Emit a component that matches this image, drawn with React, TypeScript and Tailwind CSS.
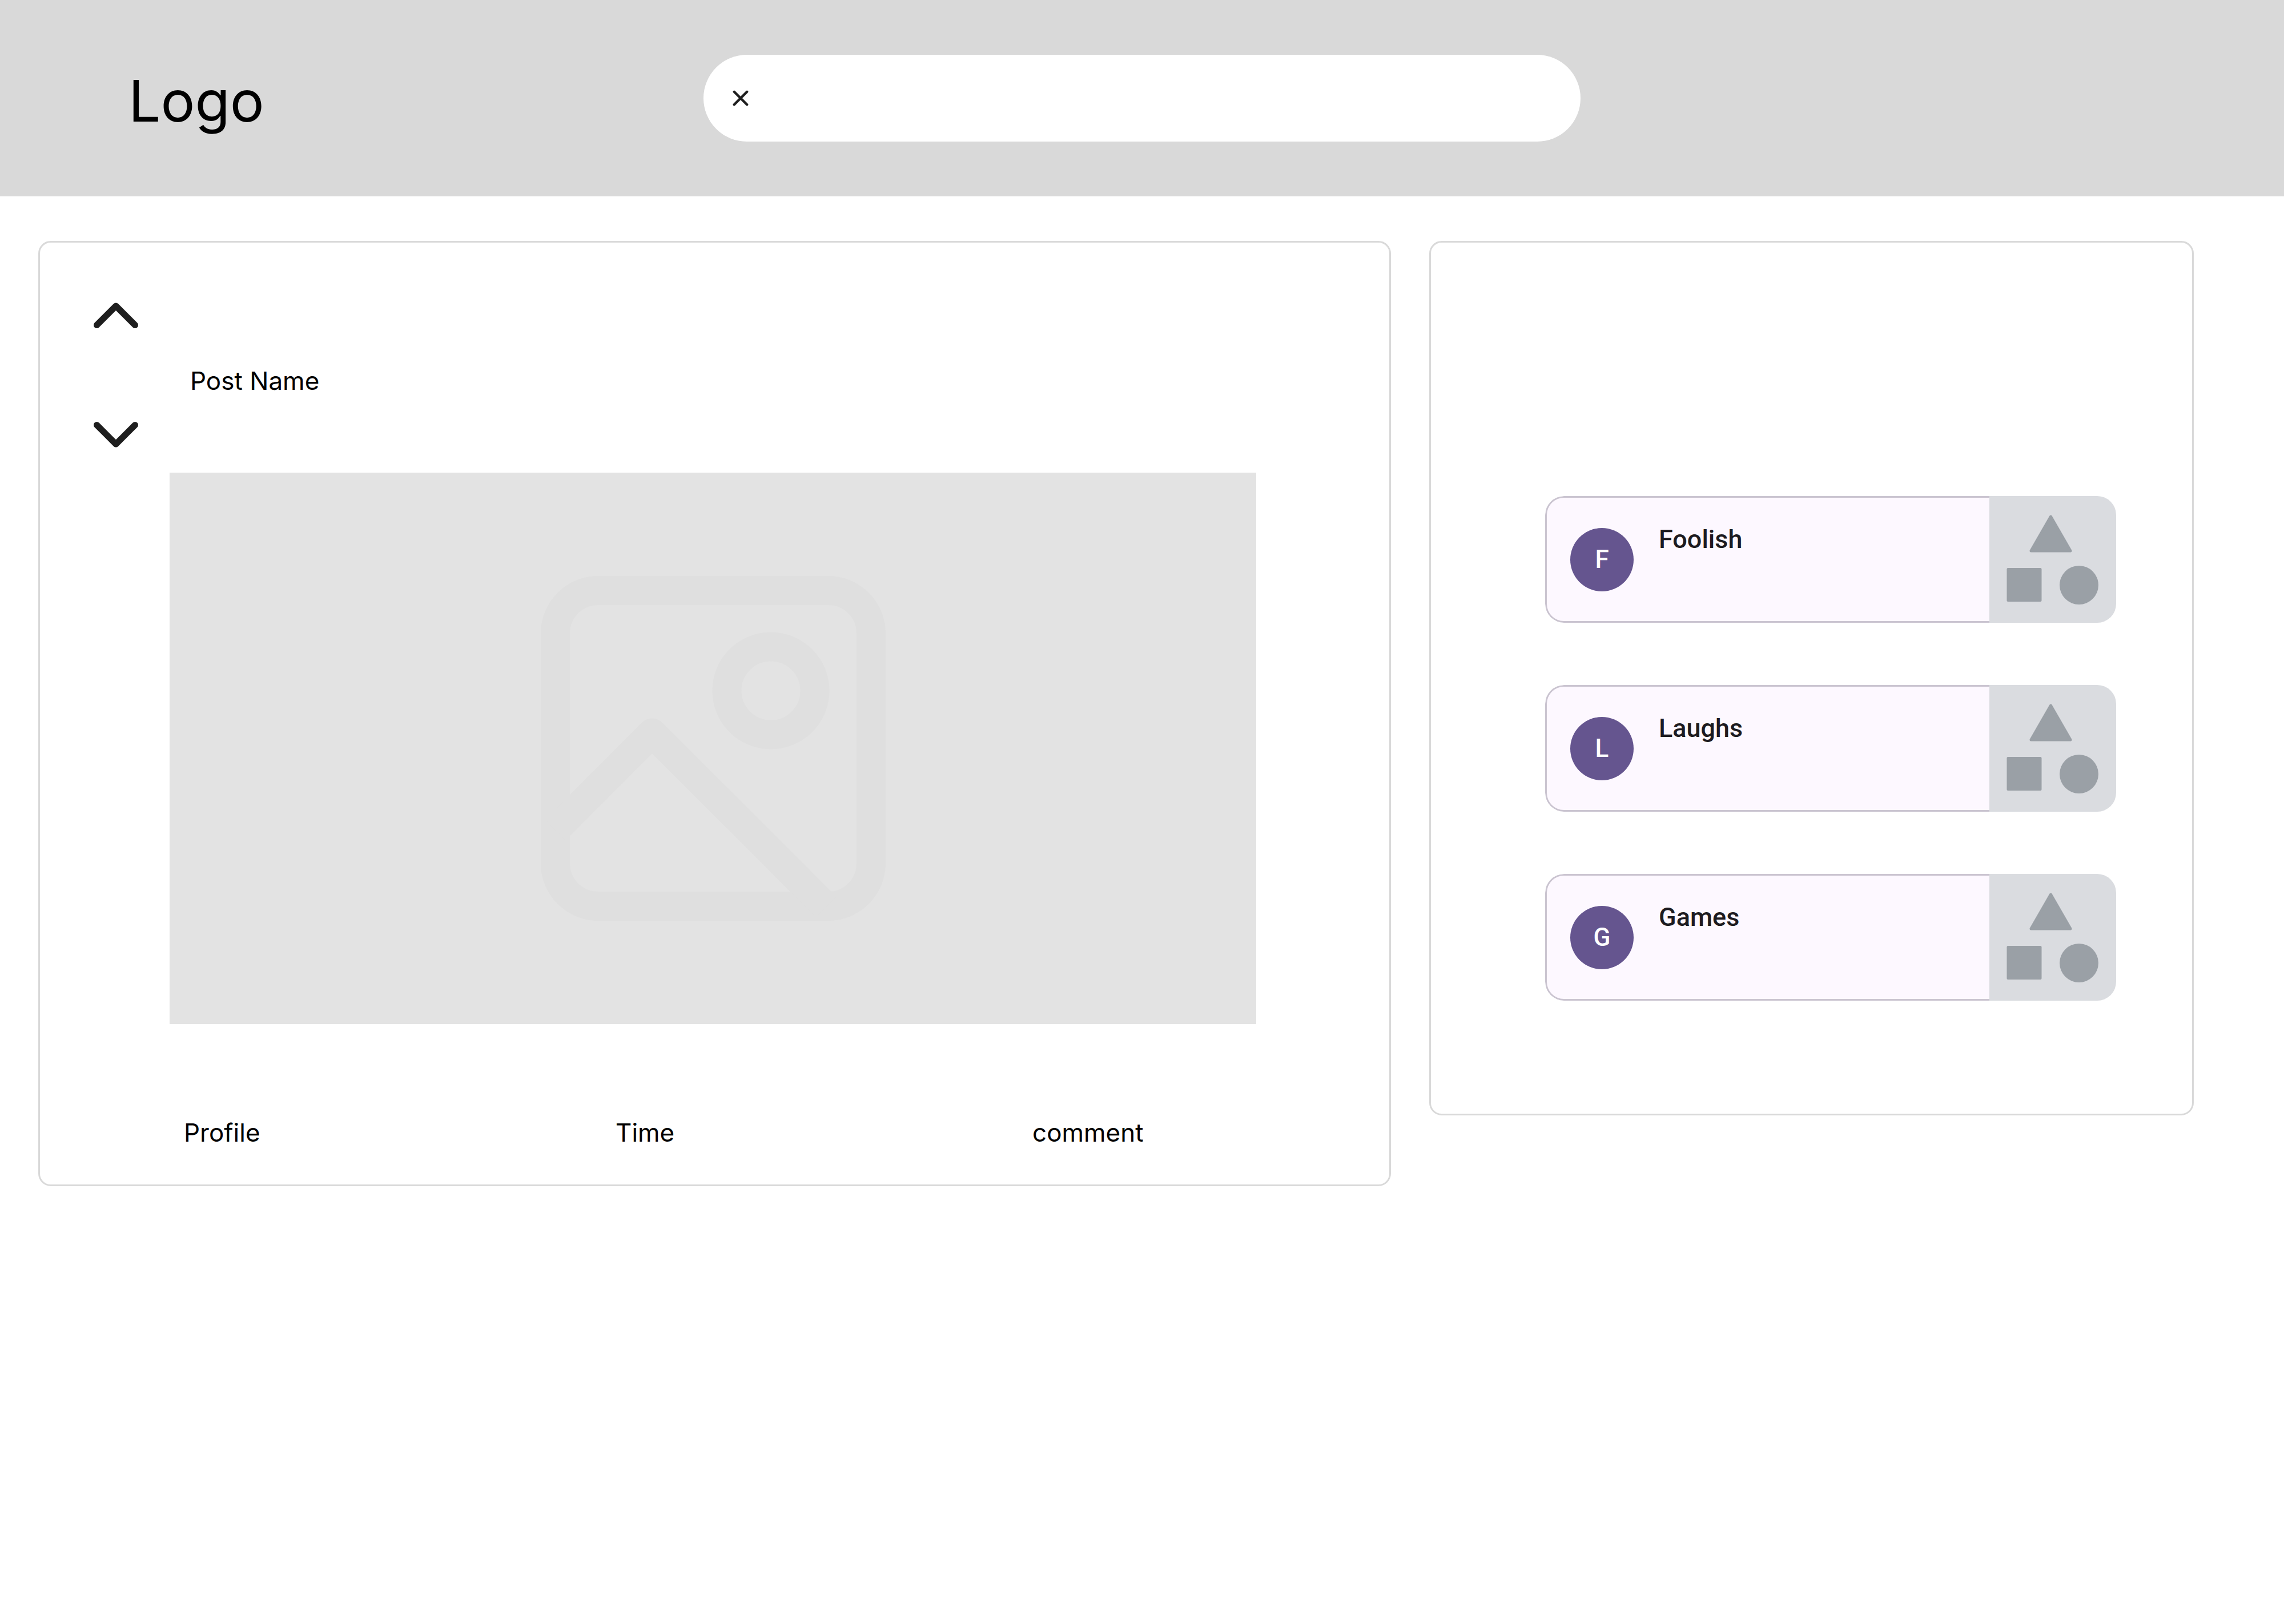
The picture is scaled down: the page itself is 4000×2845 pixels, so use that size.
const communities = ["Foolish", "Laughs", "Games"];

function CloseIcon() {
  return (
    <svg viewBox="0 0 28 28" className="size-7" fill="none" stroke="#1e1e1e" strokeWidth="4.4" strokeLinecap="round" aria-hidden="true">
      <path d="M2.8 2.8 25.2 25.2M25.2 2.8 2.8 25.2" />
    </svg>
  );
}

function Chevron({ direction }: { direction: "up" | "down" }) {
  return (
    <svg viewBox="0 0 78 45" className="block h-[45px] w-[78px]" fill="none" stroke="#1e1e1e" strokeWidth="11" strokeLinecap="round" strokeLinejoin="round" aria-hidden="true">
      <path d={direction === "up" ? "M5.5 39.5 39 6 72.5 39.5" : "M5.5 5.5 39 39 72.5 5.5"} />
    </svg>
  );
}

function PictureIcon() {
  return (
    <svg viewBox="0 0 604 604" className="w-[604px]" fill="none" stroke="#dfdfdf" strokeWidth="51" strokeLinejoin="round" aria-hidden="true">
      <rect x="25.5" y="25.5" width="553" height="553" rx="75" />
      <circle cx="403" cy="201" r="77" />
      <path d="M25.5 445 195 275 500 580" />
    </svg>
  );
}

function ShapesIcon() {
  return (
    <svg viewBox="0 0 222 222" className="size-[222px]" fill="#9aa0a6" stroke="#9aa0a6" strokeLinejoin="round" aria-hidden="true">
      <path d="M107.5 36 142 96H73Z" strokeWidth="5" />
      <rect x="32.5" y="128" width="57" height="55" strokeWidth="4" />
      <circle cx="157" cy="156" r="34" stroke="none" />
    </svg>
  );
}

function CommunityCard({ name }: { name: string }) {
  return (
    <li className="flex h-[222px] overflow-hidden rounded-[33px] font-['Roboto',sans-serif] text-[45px] font-medium leading-[66px]">
      <div className="flex flex-1 items-center gap-11 rounded-l-[33px] border-y-3 border-l-3 border-[#cac4d0] bg-[#fdf8ff] pl-[41px]">
        <span className="flex size-[111px] items-center justify-center rounded-full bg-[#65558f] text-[44px] text-white">{name[0]}</span>
        <h2 className="self-start pt-10 text-[#1d1b20]">{name}</h2>
      </div>
      <div className="bg-[#dadce0]">
        <ShapesIcon />
      </div>
    </li>
  );
}

export default function App() {
  return (
    <div className="min-h-screen bg-white font-['Inter',sans-serif] text-[44px] leading-[54px] text-black">
      <header className="grid h-[344px] grid-cols-[1fr_1536px_1fr] items-center bg-[#d9d9d9]">
        <a href="#" className="justify-self-start pt-2.5 pl-[225px] text-[100px] leading-[120px]">Logo</a>
        <form role="search" className="flex h-[152px] items-center rounded-full bg-white pr-16 pl-[33px]">
          <button type="button" aria-label="Clear search" className="flex size-16 items-center justify-center">
            <CloseIcon />
          </button>
          <input type="text" aria-label="Search" className="h-full min-w-0 flex-1 bg-transparent pl-6 outline-none" />
        </form>
      </header>

      <main className="grid grid-cols-[2369fr_1339fr] items-start gap-[67px] pt-[78px] pr-[158px] pl-[67px]">
        <article className="rounded-[22px] border-3 border-[#d9d9d9] pt-[105px] pb-16">
          <div className="flex items-center gap-[91px] pl-[94px]">
            <div className="flex flex-col gap-[164px]">
              <button type="button" aria-label="Vote up">
                <Chevron direction="up" />
              </button>
              <button type="button" aria-label="Vote down">
                <Chevron direction="down" />
              </button>
            </div>
            <h1 className="pt-5">Post Name</h1>
          </div>
          <div className="mt-11 mr-[233px] ml-[227px] flex h-[966px] items-center justify-center bg-[#e3e3e3]">
            <PictureIcon />
          </div>
          <footer className="mt-[163px] mr-[233px] ml-[252px] grid grid-cols-[756fr_730fr_392fr]">
            <a href="#" className="justify-self-start">Profile</a>
            <span>Time</span>
            <a href="#" className="justify-self-start">comment</a>
          </footer>
        </article>

        <aside className="rounded-[22px] border-3 border-[#d9d9d9] pt-[444px] pr-[133px] pb-[198px] pl-[200px]">
          <ul className="flex flex-col gap-[109px]">
            {communities.map((name) => (
              <CommunityCard key={name} name={name} />
            ))}
          </ul>
        </aside>
      </main>
    </div>
  );
}
